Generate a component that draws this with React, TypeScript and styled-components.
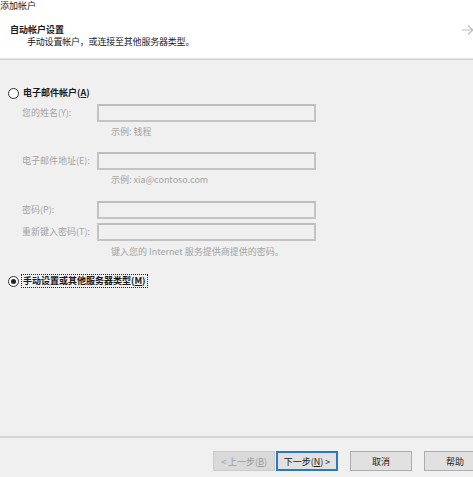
import * as React from 'react'
import styled, { createGlobalStyle } from 'styled-components'

const GlobalStyle = createGlobalStyle`
  html, body {
    margin: 0;
    padding: 0;
    background: #f0f0f0;
  }
  body {
    font-family: 'Noto Sans CJK SC', 'Liberation Sans', sans-serif;
    font-size: 9px;
    color: #1a1a1a;
  }
`

const Window = styled.div`
  width: 473px;
  height: 477px;
  overflow: hidden;
  display: flex;
  flex-direction: column;
  background: #f0f0f0;
`

const Header = styled.div`
  position: relative;
  box-sizing: border-box;
  height: 59px;
  background: #ffffff;
  border-bottom: 1px solid #e6e6e6;
  box-shadow: 0 1px 0 #cfcfcf;
`

const WindowTitle = styled.div`
  font-size: 9px;
  line-height: 11px;
  color: #222;
`

const Heading = styled.div`
  margin: 13px 0 0 10px;
  font-weight: bold;
  font-size: 9px;
  line-height: 11px;
`

const SubHeading = styled.div`
  margin: 1px 0 0 27px;
  font-size: 9px;
  line-height: 11px;
  letter-spacing: -0.2px;
`

const CornerIcon = styled.svg`
  position: absolute;
  right: -2px;
  top: 24px;
`

const Body = styled.div`
  flex: 1;
  display: flex;
  flex-direction: column;
  padding: 27px 0 0 8px;
`

const RadioRow = styled.div<{ $gap?: number }>`
  display: flex;
  align-items: center;
  gap: 2px;
  height: 14px;
  margin-top: ${(p) => p.$gap ?? 0}px;
`

const RadioCircle = styled.span<{ $checked?: boolean }>`
  width: 9px;
  height: 9px;
  border: 1px solid #333;
  border-radius: 50%;
  background: #fff;
  display: flex;
  align-items: center;
  justify-content: center;
  &::after {
    content: '';
    width: 5px;
    height: 5px;
    border-radius: 50%;
    background: ${(p) => (p.$checked ? '#222' : 'transparent')};
  }
`

const RadioLabel = styled.span<{ $focused?: boolean }>`
  font-weight: bold;
  font-size: 9px;
  line-height: 12px;
  padding: 0 1px;
  border: 1px ${(p) => (p.$focused ? 'dotted #222' : 'solid transparent')};
`

const Form = styled.div`
  display: grid;
  grid-template-columns: 75px 219px;
  margin: 2px 0 0 14px;
`

const FieldLabel = styled.div<{ $top?: number }>`
  color: #a3a3a3;
  font-size: 9px;
  line-height: 18px;
  white-space: nowrap;
  margin-top: ${(p) => p.$top ?? 0}px;
`

const Field = styled.div<{ $top?: number }>`
  height: 14px;
  border: 2px solid #c4c4c4;
  border-top-color: #bdbdbd;
  background: #f0f0f0;
  margin-top: ${(p) => p.$top ?? 0}px;
`

const Hint = styled.div<{ $top?: number }>`
  grid-column: 2;
  color: #a3a3a3;
  font-size: 9px;
  line-height: 13px;
  white-space: nowrap;
  padding-left: 14px;
  margin-top: ${(p) => p.$top ?? 0}px;
`

const Footer = styled.div`
  box-sizing: border-box;
  height: 41px;
  border-top: 2px solid #d3d3d3;
  display: flex;
  align-items: flex-start;
  padding: 13px 0 0 213px;
  gap: 12px;
`

const ButtonPair = styled.div`
  display: flex;
  gap: 1px;
`

const Button = styled.div<{ $primary?: boolean; $disabled?: boolean }>`
  box-sizing: border-box;
  flex: 0 0 auto;
  width: 62px;
  height: 20px;
  display: flex;
  align-items: center;
  justify-content: center;
  font-size: 9px;
  white-space: nowrap;
  background: ${(p) => (p.$disabled ? '#d9d9d9' : '#e1e1e1')};
  color: ${(p) => (p.$disabled ? '#9c9c9c' : '#1a1a1a')};
  border: ${(p) => (p.$primary ? '2px solid #2a78c4' : '1px solid #adadad')};
  border-color: ${(p) => (p.$disabled ? '#cccccc' : undefined)};
`

export default function App() {
  return (
    <Window>
      <GlobalStyle />
      <Header>
        <WindowTitle>添加帐户</WindowTitle>
        <Heading>自动帐户设置</Heading>
        <SubHeading>手动设置帐户，或连接至其他服务器类型。</SubHeading>
        <CornerIcon width="14" height="12" viewBox="0 0 14 12">
          <path d="M1 6 H12 M7 1.5 L12 6 L7 10.5" fill="none" stroke="#bdbdbd" strokeWidth="1.2" />
        </CornerIcon>
      </Header>
      <Body>
        <RadioRow>
          <RadioCircle />
          <RadioLabel>
            电子邮件帐户(<u>A</u>)
          </RadioLabel>
        </RadioRow>
        <Form>
          <FieldLabel $top={2}>您的姓名(Y):</FieldLabel>
          <Field $top={2} />
          <Hint $top={3}>示例: 钱程</Hint>
          <FieldLabel $top={14}>电子邮件地址(E):</FieldLabel>
          <Field $top={14} />
          <Hint $top={3}>示例: xia@contoso.com</Hint>
          <FieldLabel $top={15}>密码(P):</FieldLabel>
          <Field $top={15} />
          <FieldLabel $top={4}>重新键入密码(T):</FieldLabel>
          <Field $top={4} />
          <Hint $top={4}>键入您的 Internet 服务提供商提供的密码。</Hint>
        </Form>
        <RadioRow $gap={16}>
          <RadioCircle $checked />
          <RadioLabel $focused>
            手动设置或其他服务器类型(<u>M</u>)
          </RadioLabel>
        </RadioRow>
      </Body>
      <Footer>
        <ButtonPair>
          <Button $disabled>&lt; 上一步(<u>B</u>)</Button>
          <Button $primary>
            下一步(<u>N</u>) &gt;
          </Button>
        </ButtonPair>
        <Button>取消</Button>
        <Button>帮助</Button>
      </Footer>
    </Window>
  )
}
